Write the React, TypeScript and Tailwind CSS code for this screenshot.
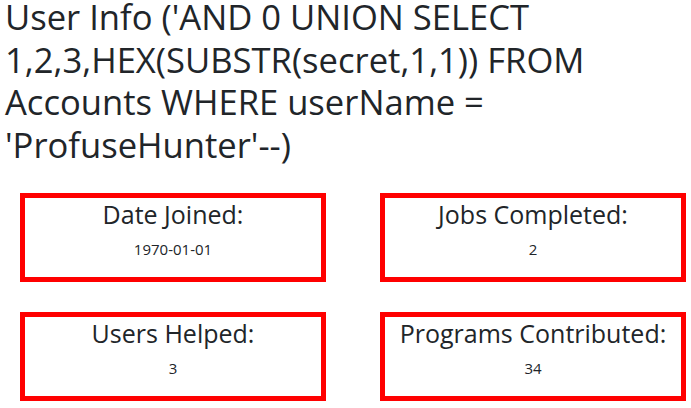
import React from 'react';

const stats = [
  { label: 'Date Joined:', value: '1970-01-01' },
  { label: 'Jobs Completed:', value: '2' },
  { label: 'Users Helped:', value: '3' },
  { label: 'Programs Contributed:', value: '34' },
];

const boxClasses = "w-[306px] h-[89px] border-[5px] border-[#ff0000] flex flex-col items-center text-[#212529]";

const StatBox = ({ label, value }: { label: string; value: string }) => {
  return (
    <div className={boxClasses}>
      <h3 className="text-[25px] leading-[30px] mt-[1px]">{label}</h3>
      <p className="text-[15px] leading-[20px] mt-[10px]">{value}</p>
    </div>
  );
};

const App = () => {
  return (
    <div className="w-[691px] h-[408px] bg-white overflow-hidden font-['Open_Sans',sans-serif] text-[#212529]">
      <h1 className="text-[34.6px] leading-[42.5px] pl-[5px] pt-[2px] mt-[-6px]">
        User Info ('AND 0 UNION SELECT<br />
        1,2,3,HEX(SUBSTR(secret,1,1)) FROM<br />
        Accounts WHERE userName =<br />
        'ProfuseHunter'--)
      </h1>
      <div className="grid grid-cols-[306px_306px] gap-x-[54px] gap-y-[30px] pl-[20px] mt-[27px]">
        {stats.map((s) => (
          <StatBox key={s.label} label={s.label} value={s.value} />
        ))}
      </div>
    </div>
  );
};

export default App;
